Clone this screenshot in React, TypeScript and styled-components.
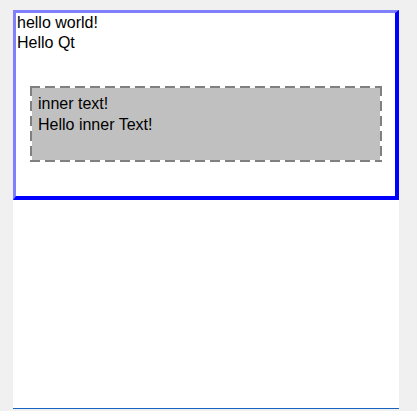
import React from "react";
import styled, { createGlobalStyle } from "styled-components";

const Global = createGlobalStyle`
  html, body {
    margin: 0;
    padding: 0;
    background: #f0f0f0;
  }
  body {
    font-family: "Liberation Sans", Arial, sans-serif;
    font-size: 16px;
    color: #000;
  }
`;

const Window = styled.div`
  margin: 10px 0 0 13px;
  width: 386px;
  height: 398px;
  background: #ffffff;
  border-bottom: 1px solid #1565c0;
`;

const OuterFrame = styled.div`
  box-sizing: border-box;
  height: 190px;
  border-style: solid;
  border-width: 3px 4px 4px 3px;
  border-color: #8080ff #0000ff #0000ff #8080ff;
  padding: 0 13px 0 1px;
  display: flex;
  flex-direction: column;
`;

const Line = styled.div`
  line-height: 20px;
  white-space: nowrap;
`;

const InnerLine = styled(Line)`
  line-height: 21px;
`;

const dash = (dir: string) =>
  `repeating-linear-gradient(${dir}, #808080 0 10px, #ffffff 10px 15px)`;

const InnerFrame = styled.div`
  box-sizing: border-box;
  margin: 33px 0 0 13px;
  height: 76px;
  padding: 7px 8px;
  background:
    ${dash("90deg")} left top / 100% 2px no-repeat,
    ${dash("90deg")} left bottom / 100% 2px no-repeat,
    ${dash("180deg")} left top / 2px 100% no-repeat,
    ${dash("180deg")} right top / 2px 100% no-repeat,
    #c0c0c0;
  display: flex;
  flex-direction: column;
`;

export default function App() {
  return (
    <>
      <Global />
      <Window>
        <OuterFrame>
          <Line>hello world!</Line>
          <Line>Hello Qt</Line>
          <InnerFrame>
            <InnerLine>inner text!</InnerLine>
            <InnerLine>Hello inner Text!</InnerLine>
          </InnerFrame>
        </OuterFrame>
      </Window>
    </>
  );
}
